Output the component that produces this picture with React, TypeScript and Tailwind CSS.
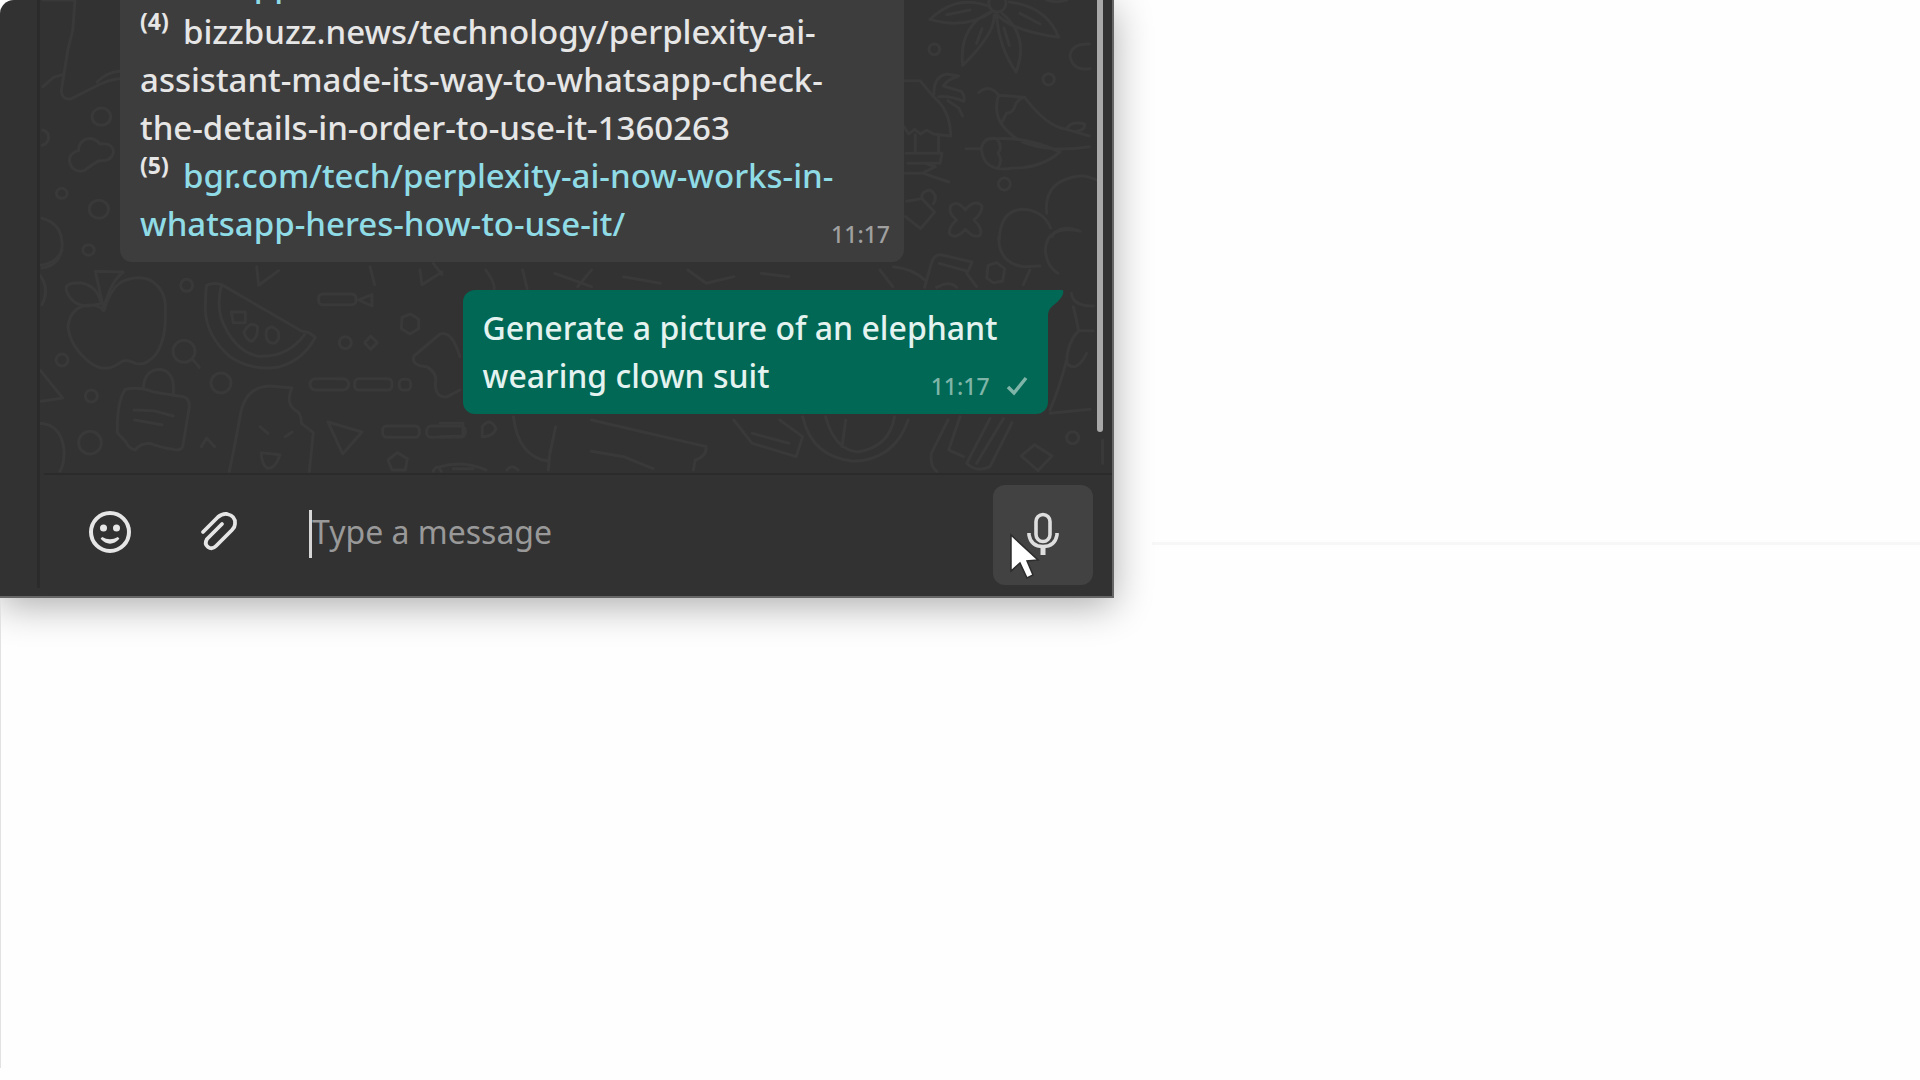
import { useState, type ReactNode } from "react";

function Doodles() {
  const g = "[&_*]:[vector-effect:non-scaling-stroke]";
  return (
    <svg
      aria-hidden="true"
      className="pointer-events-none absolute top-0 left-0"
      width="1072"
      height="474"
      viewBox="40 0 1072 474"
      fill="none"
      stroke="#393939"
      strokeWidth="3"
      strokeLinecap="round"
      strokeLinejoin="round"
    >
      {/* left edge: folded map, clouds and bubbles */}
      <g className={g} transform="scale(0.357 0.3333)">
        <path d="M120 0H210L204 90L190 150L172 270Q172 302 200 296L270 258Q300 240 334 236M120 260L150 232L175 224M272 246Q300 216 334 214" />
        <circle cx="284" cy="350" r="26" />
        <path d="M120 390Q138 398 136 415Q132 432 118 436" />
        <path d="M236 420Q262 408 280 432Q316 428 318 456Q312 486 278 482Q252 498 236 512Q206 520 196 490Q188 462 220 452Q220 430 236 420Z" />
        <circle cx="173" cy="580" r="15" />
        <circle cx="277" cy="628" r="27" />
        <circle cx="248" cy="750" r="16" />
        <path d="M118 655Q176 672 174 740Q168 796 118 804" />
      </g>
      {/* fruit, bag, ice cream */}
      <g className={g} transform="translate(40 250) scale(0.3333)">
        <path d="M192 182Q210 120 240 98Q290 74 330 90Q380 120 376 180Q380 260 350 310Q318 350 286 340Q256 324 240 338Q196 372 150 338Q90 290 84 230Q90 180 130 168Q170 158 192 182Z" />
        <path d="M190 172L166 64L250 66Q226 84 210 120Z" />
        <path d="M184 160Q170 104 120 98Q70 98 80 124Q96 166 140 168Q170 164 184 160Z" />
        <path d="M500 106Q520 96 545 104L786 244Q806 244 826 262Q790 330 720 350Q640 366 570 320Q500 260 496 180Q496 130 500 106ZM545 104Q530 160 544 206Q580 300 650 318Q740 326 794 254" />
        <path d="M574 186H616V218H580ZM612 248Q628 210 652 230Q656 262 634 274Q620 270 612 248ZM680 240Q694 220 714 244Q722 268 704 280Q680 280 678 256Z" />
        <circle cx="440" cy="106" r="18" />
        <circle cx="432" cy="304" r="33" />
        <path d="M456 326L478 352" />
        <circle cx="66" cy="330" r="18" />
        <circle cx="154" cy="438" r="18" />
        <circle cx="543" cy="399" r="30" />
        <path d="M0 360L68 444L4 454M0 76Q30 118 6 164M0 46Q50 40 66 0M0 520Q64 524 72 600Q74 640 60 664" />
        <path d="M256 418Q300 408 340 426L430 440Q450 446 448 470L428 590Q420 604 400 598Q360 592 330 580Q300 580 286 600Q266 596 258 576L232 548Q230 480 246 436ZM310 416Q312 360 360 358Q406 364 400 432M282 480L340 482L400 498M284 510L366 524" />
        <circle cx="150" cy="578" r="34" />
        <path d="M568 664Q584 590 600 500Q614 410 690 408L756 414Q736 456 764 480Q786 490 784 520L820 548L808 664M660 530L684 550M736 560L756 546M664 608L720 614Q704 660 680 654Q664 640 664 608Z" />
        <path d="M650 50L656 106L716 62M990 50L1004 104M1140 60L1146 104L1206 66M1180 40L1206 74" />
        <rect x="836" y="132" width="112" height="32" rx="12" />
        <path d="M956 150L996 134V168Z" />
        <circle cx="916" cy="278" r="18" />
        <path d="M974 278L992 258L1012 278L992 298ZM1086 202L1112 192L1136 208V236L1110 252L1084 236Z" />
        <rect x="810" y="386" width="116" height="34" rx="17" />
        <rect x="944" y="386" width="112" height="34" rx="12" />
        <rect x="1078" y="388" width="34" height="32" rx="12" />
        <path d="M1260 320Q1236 240 1200 252L1122 318Q1112 346 1160 350Q1194 370 1186 400Q1186 446 1222 440L1260 420" />
        <path d="M864 516L966 546L908 612Z" />
        <rect x="1028" y="528" width="110" height="34" rx="12" />
        <rect x="1160" y="528" width="116" height="34" rx="14" />
        <path d="M1044 630L1072 608L1102 626L1096 660H1056ZM484 590L500 564L524 590M1180 664Q1190 640 1204 664M1240 656H1300" />
      </g>
      {/* flower, hut, peppers */}
      <g className={g} transform="translate(880) scale(0.3333)">
        <path d="M330 20Q230 -20 150 58Q260 90 338 34M200 44L270 30M344 34Q380 90 536 112Q500 20 388 6M420 40L480 72M342 46Q346 100 248 196Q236 80 330 36M290 130L306 86M350 46Q356 140 408 216Q450 110 366 40M372 84L388 136M500 0Q530 10 560 0" />
        <circle cx="352" cy="10" r="26" />
        <circle cx="163" cy="148" r="16" />
        <circle cx="506" cy="238" r="17" />
        <path d="M628 132Q574 130 570 168Q578 214 630 206" />
        <path d="M70 242H120L160 290Q210 330 212 404M72 380L86 402L104 388L122 402L140 390L160 402L212 408M106 404V460M176 404V460M78 460H186L180 490H84M136 490L166 500L134 516M76 520H130L206 546M162 284Q160 230 200 222L236 228Q200 240 190 258L244 274Q256 290 252 304Q210 286 176 290M204 302L236 324L248 348" />
        <path d="M296 278Q330 250 356 286L434 292Q500 380 560 388L628 408M356 286Q340 330 364 372Q400 420 450 434Q520 456 628 440M364 372Q374 350 380 340Q400 340 408 310Q420 294 434 292M560 388Q570 362 614 372Q616 390 590 394M258 446H304Q310 410 350 416Q440 410 540 456Q480 506 400 504Q310 520 304 446M350 416Q370 440 354 460Q370 480 354 504" />
        <circle cx="373" cy="552" r="18" />
        <path d="M212 618Q230 598 256 630Q284 596 306 618Q306 640 282 660Q310 686 300 706Q280 716 256 688Q226 722 208 700Q206 680 230 660Q204 640 212 618Z" />
        <path d="M80 604L126 596L164 636L122 686L76 650M126 596Q122 574 150 570Q176 586 160 612" />
        <path d="M500 640Q490 540 600 528Q620 526 650 540M358 720Q360 630 430 628Q490 632 512 684M516 710Q540 670 600 694" />
      </g>
      {/* right side below the peppers */}
      <g className={g} transform="translate(860 200) scale(0.3333)">
        <path d="M416 110Q416 190 490 200L540 198M656 92Q560 76 556 150Q560 200 594 220M490 254L510 210M194 262L214 190Q224 158 250 166L336 186L324 214L238 190M60 210L98 260M100 200Q160 206 194 240M230 262Q270 240 290 262M320 220L350 260" />
        <path d="M384 196L410 188L434 206L428 244L400 248L380 234Z" />
        <path d="M634 280Q640 320 700 318M640 320Q650 360 656 392H700M656 392Q620 430 620 490Q650 520 680 460M620 480Q600 560 570 630M570 640L690 628" />
        <circle cx="638" cy="713" r="18" />
        <path d="M484 768L524 734L576 768L534 812ZM264 660L214 760Q210 800 230 814M300 650L266 750L310 770M390 656L320 790Q350 820 390 800L456 668M430 656L350 790M728 720V790" />
      </g>
      {/* strip around the sent message */}
      <g className={g} transform="translate(440 270) scale(0.459 0.3333)">
        <path d="M160 440Q170 560 236 574L252 470M236 600L240 540M330 450L580 530Q580 560 556 570L552 600M330 544L400 560L464 596M640 450L680 520L776 560L790 500L740 450M680 490L760 520M790 440Q810 560 900 574Q990 570 1020 450M840 440Q860 540 910 546Q980 530 990 440M884 450L876 530M0 500L50 498V460H0M92 500V470Q110 440 122 476Q116 500 92 500ZM0 590Q50 570 100 600M146 600Q156 580 170 600" />
        <path d="M100 0Q120 40 118 56M180 0L190 56M250 10L330 50M330 0L300 50M400 20L480 40M540 0L580 40L640 20M700 10L760 20" />
      </g>
    </svg>
  );
}

function Ref({ children }: { children: ReactNode }) {
  return <sup className="static inline-block w-[43px] align-[14px] text-[23px] font-bold">{children}</sup>;
}

function Cursor() {
  return (
    <svg aria-hidden="true" className="pointer-events-none absolute top-12 left-4" width="32" height="48" viewBox="0 0 32 48">
      <path d="M2 2V38L11 30L18 45L24 42L18 28L29 27Z" fill="#fff" stroke="#2c2c2c" strokeWidth="1.5" />
    </svg>
  );
}

export default function App() {
  const [text, setText] = useState("");
  return (
    <main className="flex min-h-screen overflow-hidden rounded-tl-[14px] bg-[#fefefe] font-['Noto_Sans','Open_Sans',sans-serif]">
      <div className="relative flex w-[58%] flex-col">
        <section
          aria-label="Chat"
          className="flex border-r-2 border-b-2 border-[#666666] bg-[#323232] shadow-[0_8px_36px_rgba(0,0,0,0.32)]"
        >
          <div className="mb-2 w-10 shrink-0 border-r-3 border-[#2b2b2b]" />
          <div className="min-w-0 flex-1">
            <div className="relative flex flex-col overflow-hidden pb-[59px] pl-20">
              <Doodles />
              <article className="relative -mt-12 w-[784px] rounded-[12px] bg-[#3d3d3d] pt-2 pr-3.5 pb-3 pl-5 text-[33px] leading-[48px] font-medium text-[#e6e6e6]">
                <p>
                  <a href="#3" className="text-[#8fdbe6]">whatsapp</a>
                  <br />
                  <Ref>(4)</Ref>bizzbuzz.news/technology/perplexity-ai-
                  <br />
                  assistant-made-its-way-to-whatsapp-check-
                  <br />
                  the-details-in-order-to-use-it-1360263
                  <br />
                  <Ref>(5)</Ref>
                  <a href="#5" className="text-[#8fdbe6]">
                    bgr.com/tech/perplexity-ai-now-works-in-
                    <br />
                    whatsapp-heres-how-to-use-it/
                  </a>
                </p>
                <footer className="-mt-[30px] flex justify-end text-[23px] leading-8 text-[#a0a0a0]">
                  <time>11:17</time>
                </footer>
              </article>

              <article className="relative mt-7 mr-16 w-[585px] self-end rounded-[12px] rounded-tr-none bg-[#006854] pt-3.5 pr-5 pb-3 pl-5 text-[32px] leading-[48px] font-medium text-[#e4f3ef]">
                <svg aria-hidden="true" className="absolute top-0 left-full" width="16" height="24" viewBox="0 0 16 24">
                  <path d="M0 0H14Q16 0 15 4Q13 9 7 14Q1 18 0 24Z" fill="#006854" />
                </svg>
                <p>
                  Generate a picture of an elephant
                  <br />
                  wearing clown suit
                </p>
                <footer className="-mt-[30px] flex items-center justify-end gap-4 text-[23px] leading-8 text-[#7fb5a8]">
                  <time>11:17</time>
                  <svg role="img" aria-label="Sent" width="22" height="22" viewBox="0 0 22 22" fill="none" stroke="currentColor" strokeWidth="3.5">
                    <path d="M2 12L8 18L20 3" />
                  </svg>
                </footer>
              </article>
              <div className="absolute top-0 right-[9px] h-[432px] w-1.5 rounded-b-full bg-[#a9a9a9]" />
            </div>

            <div className="ml-1 border-t-2 border-[#2b2b2b]" />
            <form className="flex items-center pt-2.5 pr-[19px] pb-[11px] pl-12" onSubmit={(e) => e.preventDefault()}>
              <div className="flex min-w-0 flex-1 items-center pb-1.5">
                <button type="button" aria-label="Emoji" className="shrink-0">
                  <svg width="44" height="44" viewBox="0 0 44 44" fill="none" stroke="#e6e6e6" strokeWidth="4" strokeLinecap="round">
                    <circle cx="22" cy="22" r="19" />
                    <circle cx="15.5" cy="18" r="3.5" fill="#e6e6e6" stroke="none" />
                    <circle cx="28.5" cy="18" r="3.5" fill="#e6e6e6" stroke="none" />
                    <path d="M13.500 28Q22 37 30.500 28Q22 33 13.500 28Z" strokeWidth="2.5" fill="#e6e6e6" />
                  </svg>
                </button>
                <button type="button" aria-label="Attach" className="ml-16 shrink-0">
                  <svg width="44" height="44" viewBox="0 0 44 44" fill="none" stroke="#e6e6e6" strokeWidth="3.8" strokeLinecap="round" strokeLinejoin="round">
                    <path d="M7 22L22 7Q26 3.500 31 4Q40 6 39 14Q39 17 36 20L20 36Q16 40 12 37Q8 34 11 29L26 14" />
                  </svg>
                </button>
                <span aria-hidden="true" className="mt-1 ml-[69px] h-12 w-[3px] shrink-0 bg-[#d6d6d6]" />
                <input
                  type="text"
                  aria-label="Type a message"
                  placeholder="Type a message"
                  value={text}
                  onChange={(e) => setText(e.target.value)}
                  className="h-12 min-w-0 flex-1 bg-transparent text-[32px] leading-[48px] text-[#ececec] outline-none placeholder:text-[#999999]"
                />
              </div>
              <button
                type="button"
                aria-label="Record voice message"
                className="relative flex size-25 shrink-0 items-center justify-center rounded-[12px] bg-[#424242] pb-0.5"
              >
                <svg width="32" height="44" viewBox="0 0 32 44" fill="none" stroke="#dedede" strokeWidth="3.6">
                  <rect x="9" y="2.500" width="14" height="27" rx="7" />
                  <path d="M2 21V23Q4 34.500 16 34.500Q28 34.500 30 23V21" />
                  <path d="M16 34V43" strokeWidth="5" />
                </svg>
                <Cursor />
              </button>
            </form>
          </div>
        </section>
        <div className="mb-3 flex-1 border-l border-[#e2e2e2]" />
      </div>
      <div className="flex-1 pt-[542px] pl-[38px]">
        <hr className="border-t-3 border-[#f7f7f7]" />
      </div>
    </main>
  );
}
